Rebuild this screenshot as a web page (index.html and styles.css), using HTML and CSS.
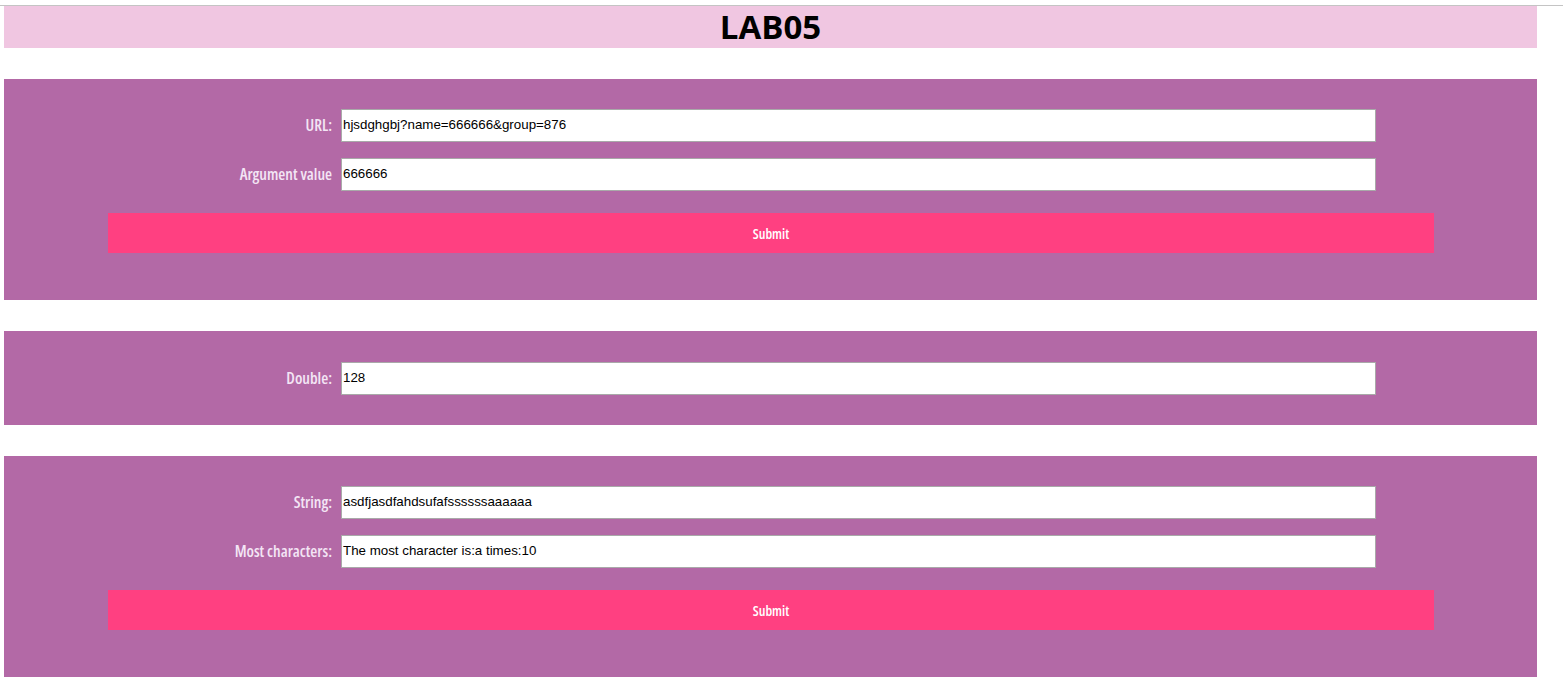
FILE: index.html
```html
<!DOCTYPE html>
<html>
<head>
<meta charset="utf-8">
<title>LAB05</title>
<link rel="stylesheet" href="styles.css">
</head>
<body>
<div class="topline"></div>
<header class="header"><h1 class="title">LAB05</h1></header>

<form class="panel panel-tall">
  <div class="row">
    <label class="label">URL:</label>
    <input class="field" type="text" value="hjsdghgbj?name=666666&amp;group=876">
  </div>
  <div class="row">
    <label class="label">Argument value</label>
    <input class="field" type="text" value="666666">
  </div>
  <button class="submit" type="button">Submit</button>
</form>

<form class="panel panel-short">
  <div class="row">
    <label class="label">Double:</label>
    <input class="field" type="text" value="128">
  </div>
</form>

<form class="panel panel-tall">
  <div class="row">
    <label class="label">String:</label>
    <input class="field" type="text" value="asdfjasdfahdsufafssssssaaaaaa">
  </div>
  <div class="row">
    <label class="label">Most characters:</label>
    <input class="field" type="text" value="The most character is:a times:10">
  </div>
  <button class="submit" type="button">Submit</button>
</form>
</body>
</html>
```

FILE: styles.css
```css
html, body {
  margin: 0;
  padding: 0;
  background: #ffffff;
}

body {
  font-family: "Liberation Sans", Arial, sans-serif;
}

.topline {
  margin-top: 5px;
  height: 1px;
  background: #c4c4c4;
}

.header {
  margin-left: 4px;
  width: 1533px;
  height: 42px;
  background: #f0c6e1;
  display: flex;
  align-items: center;
  justify-content: center;
}

.title {
  margin: 0;
  font-family: "Open Sans", "Noto Sans", sans-serif;
  font-weight: 700;
  font-size: 33px;
  line-height: 42px;
  color: #000;
}

.panel {
  margin: 31px 0 0 4px;
  width: 1533px;
  box-sizing: border-box;
  background: #b369a6;
  display: flex;
  flex-direction: column;
}

.panel-tall {
  height: 221px;
  padding-top: 30px;
}

.panel-short {
  height: 94px;
  padding-top: 31px;
}

.row {
  display: flex;
  align-items: center;
  gap: 9px;
  margin-bottom: 16px;
}

.row:last-of-type {
  margin-bottom: 0;
}

.label {
  width: 328px;
  text-align: right;
  font-family: "Open Sans", "DejaVu Sans", sans-serif;
  font-stretch: 75%;
  font-weight: 600;
  font-size: 16px;
  line-height: 20px;
  padding-bottom: 2px;
  color: #f3e5f5;
}

.field {
  width: 1035px;
  height: 33px;
  box-sizing: border-box;
  border: 1px solid #a9a9a9;
  padding: 0 1px 2px;
  font-family: "Liberation Sans", Arial, sans-serif;
  font-size: 13.33px;
  color: #000;
  background: #fff;
  outline: none;
}

.submit {
  margin: 22px 0 0 104px;
  width: 1326px;
  height: 40px;
  border: none;
  background: #ff4081;
  color: #fff;
  font-family: "Open Sans", "DejaVu Sans", sans-serif;
  font-stretch: 75%;
  font-weight: 600;
  font-size: 14px;
  padding: 0;
}
```
